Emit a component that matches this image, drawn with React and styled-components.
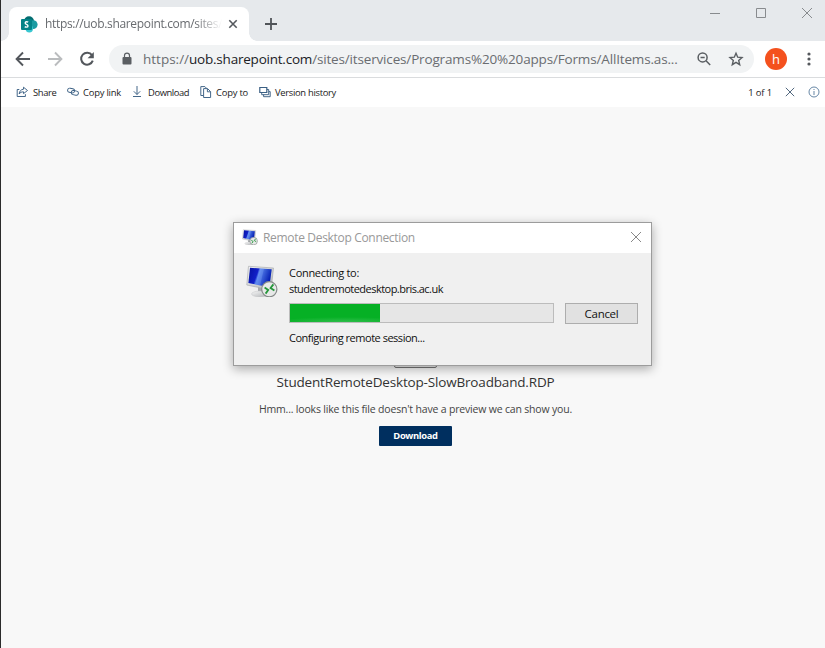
import React from 'react';
import styled, { createGlobalStyle } from 'styled-components';

const Global = createGlobalStyle`
  * { box-sizing: border-box; }
  body { margin: 0; overflow: hidden; font-family: "Open Sans", "Noto Sans", sans-serif; }
  svg { display: block; flex: none; }
  button { font-family: inherit; margin: 0; padding: 0; }
`;

const Window = styled.div`
  position: relative;
  width: 825px;
  height: 648px;
  display: flex;
  flex-direction: column;
  background: #f8f8f8;
  border-left: 1px solid #2b2b2b;
  overflow: hidden;
`;

const Label = styled.span`
  display: block;
  flex: none;
  white-space: nowrap;
  padding-top: ${p => p.$drop || 0}px;
  font-size: ${p => p.$size}px;
  line-height: ${p => p.$line || 16}px;
  letter-spacing: ${p => p.$track || 0}px;
  color: ${p => p.$color || '#222'};
  font-weight: ${p => p.$weight || 400};
`;

const TabStrip = styled.header`
  height: 41px;
  flex: none;
  display: flex;
  align-items: flex-start;
  background: #e6e9ec;
`;

const Tab = styled.div`
  position: relative;
  width: 240px;
  height: 34px;
  margin: 7px 0 0 8px;
  padding: 0 10px 0 12px;
  display: flex;
  align-items: center;
  background: #fff;
  border-radius: 8px 8px 0 0;
  &::before, &::after {
    content: '';
    position: absolute;
    bottom: 0;
    width: 8px;
    height: 8px;
  }
  &::before { left: -8px; background: radial-gradient(circle at 0 0, transparent 7.5px, #fff 8px); }
  &::after { right: -8px; background: radial-gradient(circle at 100% 0, transparent 7.5px, #fff 8px); }
`;

const TabTitle = styled.div`
  width: 182px;
  margin-left: 7px;
  mask-image: linear-gradient(90deg, #000 150px, transparent 177px);
`;

const NewTab = styled.div`
  margin: 17px 0 0 15px;
`;

const WindowControls = styled.div`
  display: flex;
  gap: 34px;
  margin: 7px 12px 0 auto;
`;

const AddressRow = styled.div`
  height: 37px;
  flex: none;
  display: flex;
  align-items: center;
  padding: 0 8px 1px 14px;
  background: #fff;
  border-bottom: 1px solid #dadcde;
`;

const NavButtons = styled.nav`
  display: flex;
  gap: 16px;
  width: 94px;
`;

const Omnibox = styled.div`
  width: 645px;
  height: 28px;
  display: flex;
  align-items: center;
  padding: 0 10px 0 12px;
  border-radius: 14px;
  background: #f1f3f4;
`;

const UrlText = styled.div`
  display: flex;
  width: 551px;
  margin-left: 10px;
`;

const OmniboxIcons = styled.div`
  display: flex;
  gap: 16px;
  margin-left: auto;
`;

const Avatar = styled.div`
  width: 22px;
  height: 22px;
  margin-left: 11px;
  border-radius: 50%;
  display: grid;
  place-items: center;
  background: #f4511e;
`;

const MenuSlot = styled.div`
  margin-left: auto;
`;

const CommandBar = styled.div`
  height: 29px;
  flex: none;
  display: flex;
  align-items: center;
  padding: 0 5px 2px 15px;
  background: #fff;
`;

const Command = styled.div`
  width: ${p => p.$width}px;
  display: flex;
  align-items: center;
  gap: ${p => p.$gap || 4}px;
`;

const CommandEnd = styled.div`
  display: flex;
  align-items: center;
  gap: 12px;
  margin-left: auto;
`;

const Preview = styled.main`
  flex: 1;
  display: flex;
  flex-direction: column;
  align-items: center;
  padding: 242px 0 0 5px;
`;

const FileIcon = styled.div`
  width: 43px;
  height: 19px;
  border: 1px solid #777;
  border-radius: 2px;
  background: #eee;
`;

const FileName = styled.div`
  margin-top: 4px;
`;

const Message = styled.div`
  margin-top: 9px;
`;

const DownloadButton = styled.button`
  width: 73px;
  height: 20px;
  margin-top: 9px;
  border: 0;
  border-radius: 1px;
  background: #002f5f;
  display: grid;
  place-items: center;
`;

const Dialog = styled.section`
  position: absolute;
  left: 232px;
  top: 222px;
  width: 419px;
  height: 144px;
  border: 1px solid #9c9c9c;
  background: #f0f0f0;
  box-shadow: 0 3px 10px rgba(0, 0, 0, 0.32);
`;

const DialogTitle = styled.div`
  height: 30px;
  display: flex;
  align-items: center;
  padding: 0 9px 2px 8px;
  gap: 5px;
  background: #fff;
`;

const DialogClose = styled.div`
  margin-left: auto;
`;

const DialogBody = styled.div`
  display: flex;
  padding: 12px 13px 0 12px;
`;

const DialogContent = styled.div`
  width: 349px;
  margin-left: 11px;
`;

const ProgressRow = styled.div`
  display: flex;
  justify-content: space-between;
  margin: 6px 0;
`;

const Track = styled.div`
  width: 265px;
  height: 20px;
  border: 1px solid #bcbcbc;
  background: #e6e6e6;
`;

const Fill = styled.div`
  width: 90px;
  height: 18px;
  background: radial-gradient(ellipse 70px 5px at 60% 100%, #2fbe4b, #06b025);
`;

const CancelButton = styled.button`
  width: 73px;
  height: 21px;
  border: 1px solid #adadad;
  background: #e1e1e1;
  display: grid;
  place-items: center;
`;

const Cross = ({ size, box, width = 1, color }) => (
  <svg width={box} height={box} viewBox={`0 0 ${box} ${box}`} fill="none" stroke={color} strokeWidth={width}>
    <path d={`M${(box - size) / 2} ${(box - size) / 2}l${size} ${size}m0 ${-size}l${-size} ${size}`} />
  </svg>
);

const SharePointLogo = () => (
  <svg width="17" height="17" viewBox="0 0 17 17">
    <circle cx="8" cy="5.2" r="5" fill="#036c70" />
    <circle cx="12.2" cy="8.6" r="4.4" fill="#1a9ba1" />
    <circle cx="8.3" cy="12.7" r="3.7" fill="#37c6d0" />
    <rect y="3" width="11" height="11" rx="1" fill="#038387" />
    <path d="M7.2 6.1Q6.6 5.7 5.5 5.7Q4.2 5.7 4.2 6.9Q4.2 7.8 5.6 8.3Q7 8.9 7 9.9Q7 11.1 5.4 11.1Q4.4 11.1 3.8 10.6" fill="none" stroke="#fff" strokeWidth="1.4" />
  </svg>
);

const RemoteIcon = ({ size }) => (
  <svg width={size} height={size} viewBox="0 0 32 32">
    <defs>
      <linearGradient id="screen" x1="0" y1="0" x2="1" y2=".3">
        <stop offset="0" stopColor="#0612a0" />
        <stop offset=".42" stopColor="#1120c8" />
        <stop offset=".5" stopColor="#5a87ef" />
        <stop offset="1" stopColor="#0620b4" />
      </linearGradient>
      <linearGradient id="metal" x1="0" y1="0" x2="1" y2="1">
        <stop offset="0" stopColor="#f8f8f8" />
        <stop offset="1" stopColor="#aeb1b4" />
      </linearGradient>
    </defs>
    <path d="M12 22l8 1v5l-8-2z" fill="#a6a9ac" />
    <ellipse cx="14" cy="29" rx="8.5" ry="2.9" fill="url(#metal)" stroke="#c2c4c6" strokeWidth=".5" />
    <path d="M2.5 1.3L27.5 3L25 25L.8 20Z" fill="url(#metal)" stroke="#aaadb0" strokeWidth=".7" />
    <path d="M4 2.7L25.7 4.3L23.4 22.3L2.4 18.1Z" fill="url(#screen)" />
    <path d="M13 3.5L18 3.8L14 20.5L10 19.5Z" fill="#87adf8" opacity=".3" />
    <circle cx="23.3" cy="24.2" r="7.6" fill="#e7e9e8" stroke="#858988" strokeWidth="1.2" />
    <path d="M18.6 22.6l3.6 2.4-2.6 3.6M27.4 19.4l-2.8 3.6 3.8 2.4" fill="none" stroke="#25963a" strokeWidth="1.8" />
  </svg>
);

const ICONS = {
  share: <><path d="M3.3 3.5H1.2v7h8.2V8.2" /><path d="M7.5 1.2l4 3.3-4 3.1V5.8C5.5 5.8 4.1 6.5 3.2 8c.2-2.8 1.7-4.5 4.3-4.8z" /></>,
  link: <><rect x=".7" y="2.4" width="7" height="4.2" rx="2.1" transform="rotate(12 4 4)" /><rect x="4.2" y="4.8" width="7.2" height="4.2" rx="2.1" transform="rotate(12 8 7)" /></>,
  download: <path d="M5 0v8.5M1.8 5.3L5 8.5l3.2-3.2M1 10.5h8" />,
  copy: <><path d="M3.3 9.5H.8V.6h4.1l1.5 1.5" /><path d="M3.6 2.6h4l3 3v5.9h-7zM7.4 2.8v3h3" /></>,
  history: <><path d="M.8 1.5h7v5h-7z" strokeWidth="1.2" /><path d="M2.7 6.7v2h7V3.5H8" /><path d="M4.6 8.7v2h6.6V5.6H9.9" /></>,
};

const commands = [
  { icon: 'share', text: 'Share', width: 51, track: -0.35, gap: 5 },
  { icon: 'link', text: 'Copy link', width: 65, track: -0.2 },
  { icon: 'download', text: 'Download', width: 68, track: -0.4 },
  { icon: 'copy', text: 'Copy to', width: 59, track: -0.2 },
  { icon: 'history', text: 'Version history', width: 90, track: -0.3 },
];

export default function App() {
  return (
    <Window>
      <Global />
      <TabStrip>
        <Tab>
          <SharePointLogo />
          <TabTitle><Label $size={12} $track={-0.33} $color="#686b6f">https://uob.sharepoint.com/sites/</Label></TabTitle>
          <Cross box={12} size={7.4} width={1.6} color="#55595e" />
        </Tab>
        <NewTab>
          <svg width="14" height="14" viewBox="0 0 14 14" stroke="#505458" strokeWidth="1.8"><path d="M7 1v12M1 7h12" /></svg>
        </NewTab>
        <WindowControls>
          <svg width="12" height="12" viewBox="0 0 12 12" stroke="#888b8e"><path d="M1 6.5h10" /></svg>
          <svg width="12" height="12" viewBox="0 0 12 12" fill="none" stroke="#888b8e"><path d="M1.5 1.5h9v9h-9z" /></svg>
          <Cross box={12} size={10} color="#888b8e" />
        </WindowControls>
      </TabStrip>

      <AddressRow>
        <NavButtons>
          <svg width="16" height="16" viewBox="0 0 16 16" fill="none" stroke="#53575c" strokeWidth="1.9"><path d="M15 8H2M8 1.5L1.6 8 8 14.5" /></svg>
          <svg width="16" height="16" viewBox="0 0 16 16" fill="none" stroke="#babcbe" strokeWidth="1.9"><path d="M1 8h13M8 1.5L14.4 8 8 14.5" /></svg>
          <svg width="16" height="16" viewBox="0 0 16 16" fill="none" stroke="#53575c" strokeWidth="2"><path d="M13 4.1A6 6 0 1 0 13.8 9.7" /><path d="M14.8 1v6.2H8.6z" fill="#53575c" stroke="none" /></svg>
        </NavButtons>
        <Omnibox>
          <svg width="12" height="14" viewBox="0 0 12 14"><rect x="1.5" y="5" width="9" height="7.5" rx="1" fill="#5a5e62" /><path d="M3.5 5.5V3.6a2.5 2.5 0 0 1 5 0v1.9" fill="none" stroke="#5a5e62" strokeWidth="1.2" /></svg>
          <UrlText>
            <Label $size={13.5} $line={20} $color="#6a6d71">https://</Label>
            <Label $size={13.5} $line={20} $track={-0.22} $color="#202124">uob.sharepoint.com</Label>
            <Label $size={13.5} $line={20} $track={-0.16} $color="#6a6d71">/sites/itservices/Programs%20%20apps/Forms/AllItems.as...</Label>
          </UrlText>
          <OmniboxIcons>
            <svg width="16" height="16" viewBox="0 0 16 16" fill="none" stroke="#5a5e62" strokeWidth="1.5"><circle cx="6.6" cy="6.4" r="4.5" /><path d="M10 9.8l4.2 4.2M4.5 6.4h4.2" /></svg>
            <svg width="16" height="16" viewBox="0 0 16 16" fill="none" stroke="#5a5e62" strokeWidth="1.4"><path d="M8 2.2l1.7 4 4.3.4-3.3 2.8 1 4.3L8 11.4l-3.7 2.3 1-4.3L2 6.6l4.3-.4z" /></svg>
          </OmniboxIcons>
        </Omnibox>
        <Avatar><Label $size={13} $color="#fff">h</Label></Avatar>
        <MenuSlot>
          <svg width="16" height="16" viewBox="0 0 16 16" fill="#55585d"><circle cx="8" cy="3" r="1.6" /><circle cx="8" cy="8" r="1.6" /><circle cx="8" cy="13" r="1.6" /></svg>
        </MenuSlot>
      </AddressRow>

      <CommandBar>
        {commands.map(c => (
          <Command key={c.text} $width={c.width} $gap={c.gap}>
            <svg width="12" height="12" viewBox="0 0 12 12" fill="none" stroke="#3b6084" strokeWidth=".95">{ICONS[c.icon]}</svg>
            <Label $size={9.4} $drop={2} $track={c.track}>{c.text}</Label>
          </Command>
        ))}
        <CommandEnd>
          <Label $size={9.4} $drop={2} $track={-0.1}>1 of 1</Label>
          <Cross box={12} size={8.4} width={0.95} color="#496078" />
          <svg width="12" height="12" viewBox="0 0 12 12" fill="none" stroke="#4b7195" strokeWidth=".85"><circle cx="6" cy="6" r="5" /><path d="M6 5v4M6 3v1" /></svg>
        </CommandEnd>
      </CommandBar>

      <Preview>
        <FileIcon />
        <FileName><Label $size={13.5} $line={20} $track={-0.17} $color="#333">StudentRemoteDesktop-SlowBroadband.RDP</Label></FileName>
        <Message><Label $size={10.5} $track={-0.18} $color="#444">Hmm... looks like this file doesn't have a preview we can show you.</Label></Message>
        <DownloadButton><Label $size={9.4} $color="#fff" $weight={700} $track={-0.35}>Download</Label></DownloadButton>
      </Preview>

      <Dialog>
        <DialogTitle>
          <RemoteIcon size={16} />
          <Label $size={12} $track={-0.32} $drop={2} $color="#999">Remote Desktop Connection</Label>
          <DialogClose><Cross box={12} size={10} color="#888" /></DialogClose>
        </DialogTitle>
        <DialogBody>
          <RemoteIcon size={32} />
          <DialogContent>
            <Label $size={11} $track={-0.3} $color="#111">Connecting to:</Label>
            <Label $size={11} $track={-0.52} $color="#111">studentremotedesktop.bris.ac.uk</Label>
            <ProgressRow>
              <Track><Fill /></Track>
              <CancelButton><Label $size={11.5} $track={-0.3} $color="#111">Cancel</Label></CancelButton>
            </ProgressRow>
            <Label $size={11} $track={-0.48} $color="#111">Configuring remote session...</Label>
          </DialogContent>
        </DialogBody>
      </Dialog>
    </Window>
  );
}
